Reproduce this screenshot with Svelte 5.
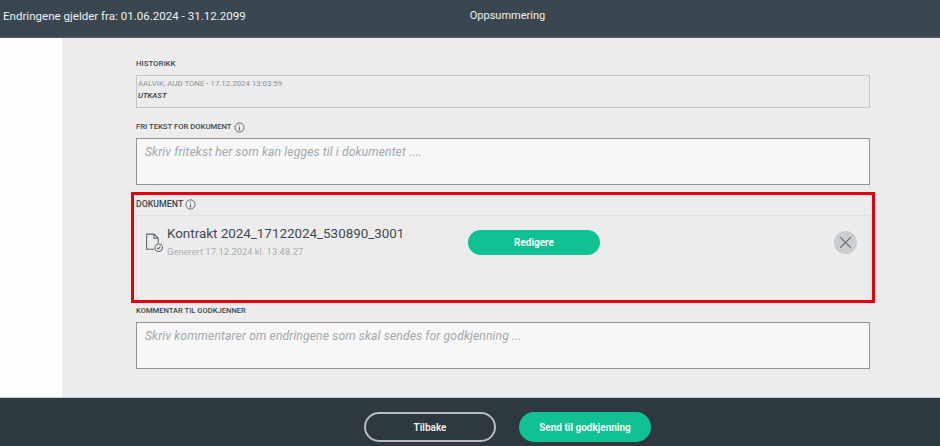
<script lang="ts">
	let fritekst = $state('');
	let kommentar = $state('');
</script>

<div class="page">
	<header class="top">
		<span class="period">Endringene gjelder fra: 01.06.2024 - 31.12.2099</span>
		<span class="title">Oppsummering</span>
	</header>

	<div class="body">
		<div class="side"></div>
		<main class="main">
			<div class="content">
				<div class="label hist-label">HISTORIKK</div>
				<div class="history">
					<div class="who">AALVIK, AUD TONE - 17.12.2024 13:03:59</div>
					<div class="status">UTKAST</div>
				</div>

				<div class="label free-label">
					FRI TEKST FOR DOKUMENT
					<svg class="info" viewBox="0 0 12 12" width="11" height="11" aria-hidden="true">
						<circle cx="6" cy="6" r="5" />
						<path d="M5 3.6h1.2M6 5.2v3.4M5 8.6h2" />
					</svg>
				</div>
				<textarea class="field free" placeholder="Skriv fritekst her som kan legges til i dokumentet ...." bind:value={fritekst}></textarea>

				<div class="label doc-label">
					DOKUMENT
					<svg class="info" viewBox="0 0 12 12" width="11" height="11" aria-hidden="true">
						<circle cx="6" cy="6" r="5" />
						<path d="M5 3.6h1.2M6 5.2v3.4M5 8.6h2" />
					</svg>
				</div>
				<div class="doc">
					<svg class="file" viewBox="0 0 20 20" width="21" height="21" aria-hidden="true">
						<path d="M9.5 16.5H2.5V2h7l4 4v4.5M9.5 2v4h4" />
						<circle cx="14" cy="15" r="3.6" />
						<path d="M12.4 15l1.2 1.2 2-2.2" />
					</svg>
					<div class="doc-text">
						<div class="doc-name">Kontrakt 2024_17122024_530890_3001</div>
						<div class="doc-date">Generert 17.12.2024 kl. 13.48.27</div>
					</div>
					<button type="button" class="btn green edit">Redigere</button>
					<button type="button" class="close" aria-label="Fjern">
						<svg viewBox="0 0 12 12" width="13" height="13" aria-hidden="true">
							<path d="M1 1l10 10M11 1L1 11" />
						</svg>
					</button>
				</div>

				<div class="label comment-label">KOMMENTAR TIL GODKJENNER</div>
				<textarea class="field comment" placeholder="Skriv kommentarer om endringene som skal sendes for godkjenning ..." bind:value={kommentar}></textarea>
			</div>
		</main>
	</div>

	<footer class="bottom">
		<button type="button" class="btn ghost">Tilbake</button>
		<button type="button" class="btn green">Send til godkjenning</button>
	</footer>

	<div class="highlight"></div>
</div>

<style>
	:global(body) {
		margin: 0;
		background: #fff;
	}
	.page {
		position: relative;
		width: 940px;
		height: 446px;
		display: flex;
		flex-direction: column;
		overflow: hidden;
		font-family: Roboto, "Liberation Sans", sans-serif;
		color: #3c4850;
	}
	.top {
		height: 38px;
		flex: none;
		box-sizing: border-box;
		background: #3b4750;
		border-bottom: 1px solid #59636a;
		color: #eef0f1;
		display: grid;
		grid-template-columns: 1fr;
		align-items: center;
		font-size: 11.55px;
	}
	.period {
		grid-area: 1 / 1;
		padding: 0 0 6px 3px;
	}
	.title {
		grid-area: 1 / 1;
		justify-self: center;
		padding: 0 0 6px 75px;
		font-size: 11px;
	}
	.body {
		flex: 1;
		display: flex;
		min-height: 0;
	}
	.side {
		width: 62px;
		flex: none;
		background: #fdfdfd;
	}
	.main {
		flex: 1;
		background: #ececec;
		padding-left: 74px;
	}
	.content {
		width: 734px;
		display: flex;
		flex-direction: column;
	}
	.label {
		font-size: 7.8px;
		font-weight: 500;
		line-height: 10px;
		color: #3c4850;
		display: flex;
		align-items: center;
		gap: 2px;
	}
	.hist-label {
		margin-top: 21px;
	}
	.history {
		margin-top: 6px;
		height: 33px;
		box-sizing: border-box;
		border: 1px solid #c4c7c9;
		padding: 2px 1px;
	}
	.who {
		font-size: 7.85px;
		line-height: 11px;
		color: #8d9397;
	}
	.status {
		font-size: 7.8px;
		line-height: 13px;
		font-weight: 500;
		font-style: italic;
		color: #333d44;
	}
	.free-label {
		margin-top: 12px;
		font-size: 7.7px;
	}
	.info {
		fill: none;
		stroke: #4a555c;
		stroke-width: 0.9;
		margin-top: 2px;
	}
	.field {
		display: block;
		box-sizing: border-box;
		width: 100%;
		margin: 0;
		padding: 5px 8px;
		resize: none;
		outline: none;
		background: #f7f7f7;
		border: 1px solid #8b959c;
		border-radius: 0;
		font-family: inherit;
		font-size: 12.2px;
		font-style: italic;
		line-height: 16px;
		letter-spacing: 0.1px;
	}
	.field::placeholder {
		color: #a3a9ad;
		opacity: 1;
	}
	.free {
		margin-top: 5px;
		height: 47px;
	}
	.doc-label {
		margin-top: 12px;
		font-size: 8.8px;
	}
	.doc {
		margin-top: 5px;
		height: 91px;
		box-sizing: border-box;
		border: 1px solid #e2e2e2;
		border-bottom: none;
		padding: 8px 12px 0 7px;
		display: flex;
		align-items: flex-start;
	}
	.file {
		flex: none;
		margin-top: 8px;
		fill: none;
		stroke: #59646b;
		stroke-width: 1;
	}
	.doc-text {
		margin-left: 2px;
		width: 301px;
		flex: none;
	}
	.doc-name {
		font-size: 13.4px;
		line-height: 20px;
		color: #3f4b53;
	}
	.doc-date {
		font-size: 9.4px;
		line-height: 14px;
		color: #a9aeb1;
		margin-top: 1px;
	}
	.btn {
		height: 30px;
		width: 132px;
		border-radius: 15px;
		box-sizing: border-box;
		font-family: inherit;
		font-size: 10px;
		font-weight: 600;
		padding: 0;
		cursor: pointer;
	}
	.green {
		background: #10c194;
		border: none;
		color: #fff;
	}
	.edit {
		height: 25px;
		margin-top: 6px;
	}
	.close {
		margin: 7px 0 0 auto;
		width: 23px;
		height: 23px;
		border-radius: 50%;
		border: none;
		padding: 0;
		background: #c9cdd0;
		display: grid;
		place-items: center;
	}
	.close svg {
		fill: none;
		stroke: #5c6870;
		stroke-width: 1;
	}
	.comment-label {
		margin-top: 0;
		font-size: 7.6px;
	}
	.comment {
		margin-top: 6px;
		height: 47px;
	}
	.bottom {
		height: 49px;
		flex: none;
		box-sizing: border-box;
		background: #2e383f;
		border-top: 1px solid #c9cbcc;
		display: flex;
		justify-content: center;
		align-items: center;
		gap: 23px;
		padding: 10px 0 0 75px;
	}
	.ghost {
		background: transparent;
		border: 2px solid #b9bdbf;
		color: #eef0f1;
	}
	.highlight {
		position: absolute;
		left: 131px;
		top: 192px;
		width: 744px;
		height: 111px;
		box-sizing: border-box;
		border: 3px solid #e3000f;
		pointer-events: none;
	}
</style>
